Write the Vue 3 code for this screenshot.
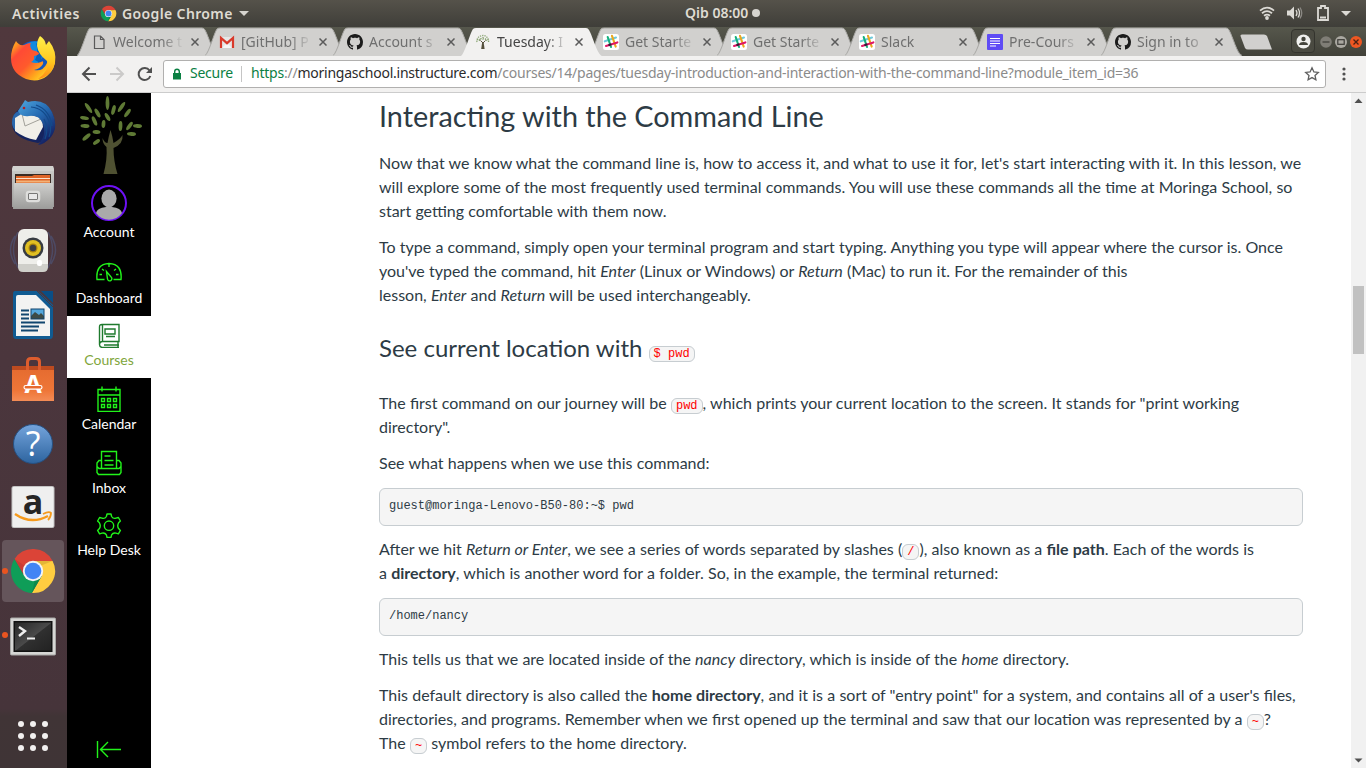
<script setup>
const tabs = [
  { title: 'Welcome t', icon: 'page' },
  { title: '[GitHub] P', icon: 'gmail' },
  { title: 'Account s', icon: 'github' },
  { title: 'Tuesday: I', icon: 'tree', active: true },
  { title: 'Get Starte', icon: 'slack' },
  { title: 'Get Starte', icon: 'slack' },
  { title: 'Slack', icon: 'slack' },
  { title: 'Pre-Cours', icon: 'doc' },
  { title: 'Sign in to', icon: 'github' },
]
const leaves = [
  [29, 7, 90, 7], [10, 12, 55, 6], [43, 11, 125, 6], [35, 14, 105, 5], [49, 17, 125, 5],
  [19, 17, 60, 5], [6, 22, 10, 4.5], [16, 25, 65, 5], [29, 21, 60, 4.5], [25, 28, 95, 4],
  [6.5, 30, 2, 4.5], [42, 30, 92, 5], [51, 30, 125, 5], [59, 30, 2, 4.5], [53, 38, 2, 4.5],
  [18, 36, 5, 4], [8, 41, 140, 5], [18, 46, 145, 4],
]
const dots = [0, 1, 2, 3, 4, 5, 6, 7, 8]
</script>

<template>
  <div class="desktop">
    <svg class="defs" width="0" height="0">
      <defs>
        <symbol id="chrome" viewBox="-24 -24 48 48">
          <path d="M-18.46-11.97A22 22 0 0 1 19.6-10L0-10L-8.66 5Z" fill="#db4437" />
          <path d="M19.6-10A22 22 0 0 1-1.14 21.97L8.66 5L0-10Z" fill="#ffcd40" />
          <path d="M-1.14 21.97A22 22 0 0 1-18.46-11.97L-8.66 5L8.66 5Z" fill="#0f9d58" />
          <path d="M0-10L19.6-10L7-5Z" fill="#c9a02e" opacity=".5" />
          <path d="M-8.66 5L-18.46-11.97L-8-5Z" fill="#b33" opacity=".5" />
          <path d="M8.66 5L-1.14 21.97L2 9Z" fill="#0b7d45" opacity=".6" />
          <circle r="10.2" fill="#f4f4f4" /><circle r="8.3" fill="#4285f4" />
        </symbol>
        <symbol id="github" viewBox="0 0 16 16">
          <path fill="#1b1b1b" d="M8 0C3.58 0 0 3.58 0 8c0 3.54 2.29 6.53 5.47 7.59.4.07.55-.17.55-.38 0-.19-.01-.82-.01-1.49-2.01.37-2.53-.49-2.69-.94-.09-.23-.48-.94-.82-1.13-.28-.15-.68-.52-.01-.53.63-.01 1.08.58 1.23.82.72 1.21 1.87.87 2.33.66.07-.52.28-.87.51-1.07-1.78-.2-3.64-.89-3.64-3.95 0-.87.31-1.59.82-2.15-.08-.2-.36-1.02.08-2.12 0 0 .67-.21 2.2.82.64-.18 1.32-.27 2-.27s1.36.09 2 .27c1.53-1.04 2.2-.82 2.2-.82.44 1.1.16 1.92.08 2.12.51.56.82 1.27.82 2.15 0 3.07-1.87 3.75-3.65 3.95.29.25.54.73.54 1.48 0 1.07-.01 1.93-.01 2.2 0 .21.15.46.55.38A8 8 0 0 0 16 8c0-4.42-3.58-8-8-8z" />
        </symbol>
        <symbol id="gmail" viewBox="0 0 16 16">
          <path d="M1 3h14v11H1z" fill="#e6e6e6" /><path d="M3 14L8 9l5 5z" fill="#f6f6f6" />
          <path d="M2 14V4l6 5.200L14 4v10" fill="none" stroke="#d93a2b" stroke-width="2.200" />
        </symbol>
        <symbol id="page" viewBox="0 0 16 16">
          <path d="M3.5 2h6l3.500 3.500v9H3.500zM9.500 2v3.500H13" fill="none" stroke="#5a5a5a" stroke-width="1.200" />
        </symbol>
        <symbol id="doc" viewBox="0 0 16 16">
          <rect width="16" height="16" rx="1" fill="#5e4bf5" />
          <path d="M3 4.5h10M3 7h10M3 9.5h10M3 12h6" stroke="#fff" stroke-width="1.2" />
        </symbol>
        <symbol id="slack" viewBox="0 0 16 16">
          <rect width="16" height="16" rx="2.5" fill="#fff" />
          <g fill="none" stroke-width="2.1" stroke-linecap="round">
            <path d="M1.800 7.300L13 3.600" stroke="#6ecadc" /><path d="M4.700 3L8 13" stroke="#16b17c" />
            <path d="M9 1.800L12.700 12.600" stroke="#e9a820" /><path d="M3 12L14.400 8.400" stroke="#e01765" />
            <path d="M6.200 11L7.600 10.600" stroke="#381b38" />
          </g>
        </symbol>
        <symbol id="tree" viewBox="0 0 16 16">
          <path d="M6.200 15l1-7h1.400l1 7z" fill="#55503c" />
          <path d="M8 9L5.500 6.500M8 9l2.500-2.500" stroke="#55503c" />
          <g fill="none" stroke="#8ba574" stroke-width="1.300" stroke-dasharray="1.300 1">
            <path d="M2 8C1 4 5 1.500 8 1.500S14 4 13.500 8" /><path d="M4.500 7C4 3.500 11.500 3 11.500 7M2 5.500h3.500M10 5.500h4M8 3v3" />
          </g>
        </symbol>
        <linearGradient id="gblue" x2="0" y2="1"><stop stop-color="#74a4dc" /><stop offset="1" stop-color="#2d649f" /></linearGradient>
        <linearGradient id="ggrey" x2="0" y2="1"><stop stop-color="#cfcfcd" /><stop offset="1" stop-color="#9c9c9a" /></linearGradient>
        <linearGradient id="gora" x2="0" y2="1"><stop stop-color="#e46a2f" /><stop offset=".7" stop-color="#ee7638" /><stop offset="1" stop-color="#f48c56" /></linearGradient>
        <linearGradient id="gfox" x1=".1" y1=".1" x2=".9" y2=".8"><stop stop-color="#ff9a22" /><stop offset=".18" stop-color="#ff4a35" /><stop offset=".5" stop-color="#ff5a2c" /><stop offset=".8" stop-color="#ffab1c" /><stop offset="1" stop-color="#ffd92b" /></linearGradient>
        <linearGradient id="gtail" x2="0" y2="1"><stop stop-color="#fff04a" /><stop offset=".6" stop-color="#ffc71f" /><stop offset="1" stop-color="#ff8a17" /></linearGradient>
        <linearGradient id="gbird" x2=".7" y2="1"><stop stop-color="#4fa8e0" /><stop offset=".5" stop-color="#2468b0" /><stop offset="1" stop-color="#131f61" /></linearGradient>
        <linearGradient id="gterm" x2="1" y2="1"><stop stop-color="#272727" /><stop offset=".5" stop-color="#4a4a4a" /><stop offset=".52" stop-color="#303030" /><stop offset="1" stop-color="#222" /></linearGradient>
      </defs>
    </svg>

    <header class="panel">
      <div class="left">
        <span class="activities">Activities</span>
        <svg class="pchrome" width="17" height="17"><use href="#chrome" /></svg>
        <span class="appname">Google Chrome</span>
        <svg width="10" height="5"><path d="M0 0h10L5 5z" fill="#d6d4cf" /></svg>
      </div>
      <div class="clock">Qib 08:00<i></i></div>
      <svg class="tray" width="96" height="27">
        <g fill="none" stroke="#dcdad5" stroke-width="1.800">
          <path d="M5 10.600Q12 4.700 19 10.600M7 13.300Q12 9 17 13.300M9 15.800Q12 13.500 15 15.800" />
        </g>
        <circle cx="12" cy="18" r="1.900" fill="#dcdad5" />
        <path d="M32 10.500h3l4-4v13l-4-4h-3z" fill="#dcdad5" />
        <path d="M41 10q2 3 0 6M43 8.500q3 4.500 0 9" fill="none" stroke="#dcdad5" stroke-width="1.300" />
        <path d="M45 7.500q3.500 5.500 0 11" fill="none" stroke="#8b8984" stroke-width="1.300" />
        <path d="M63 8h3V6h4v2h3v12H63zM65 17.500h6" fill="none" stroke="#dcdad5" stroke-width="1.800" />
        <path d="M86 11h10l-5 5z" fill="#dcdad5" />
      </svg>
    </header>

    <div class="body">
      <aside class="launcher">
        <div class="app">
          <svg viewBox="0 0 48 48">
            <circle cx="25" cy="24" r="18" fill="#1457bd" /><path d="M14 13Q20 4 31 7L34 22 27 30 17 25z" fill="#128be0" />
            <path d="M31 28Q36 15 27 8q3 9-1 17z" fill="#0a60ba" />
            <path d="M7 6Q10 11 15 10Q19 8 22 8Q20 11 23 15Q28 16 30 18Q30 20 25 21Q26 25 22 27Q27 29 32 27Q35 25 34 29Q31 34 25 35Q34 37 38 28Q41 22 46 22Q47 34 38 41Q29 48 17 44Q2 38 2 23Q2 14 7 6z" fill="url(#gfox)" />
            <path d="M31 1Q36 4 37 10L40 6Q48 16 46 28Q42 42 29 44Q41 35 38 26Q29 19 28 11Q28 5 31 1z" fill="url(#gtail)" />
          </svg>
        </div>
        <div class="app">
          <svg viewBox="0 0 48 48">
            <path d="M9 11Q17 1 28 3Q46 8 46 27Q45 39 29 44Q4 40 3 25Q3 16 9 11z" fill="#15245f" />
            <path d="M3 24Q3 14 10 12L16 16 9 25 8 33Q3 29 3 24z" fill="#2a68ad" />
            <path d="M6 19l8-5 19 5 1 9-7 13q-12-2-21-9z" fill="#f1efe8" /><path d="M13 15l3 12 16-7" fill="none" stroke="#a2a19a" />
            <path d="M9 12Q15 3 16 1l3 2Q36-1 43 13Q50 27 42 38Q36 45 29 46Q38 37 34 25Q30 15 20 17Q15 18 11 15z" fill="url(#gbird)" />
            <path d="M22 8Q36 9 41 25M27 6Q41 11 43 27M35 20Q40 29 36 40M38 18Q44 28 40 38" fill="none" stroke="#134a8a" stroke-width="1.200" />
            <circle cx="15" cy="9" r="1.300" fill="#a8242a" />
          </svg>
        </div>
        <div class="app">
          <svg viewBox="0 0 48 48">
            <path d="M4 3h40l1 3v38H3V6z" fill="url(#ggrey)" /><path d="M4 3h40l1 5H3z" fill="#d2d2cf" />
            <rect x="6" y="11" width="36" height="10" fill="#3b2b24" /><path d="M7 13h16l2-1h16v9H7z" fill="#df6529" /><path d="M7 15.500h34" stroke="#fbe1cb" /><path d="M7 18.500h34" stroke="#f3b277" stroke-width="2" />
            <path d="M5 20h39v26H4z" fill="url(#ggrey)" />
            <rect x="18" y="29" width="12" height="9" rx="2" fill="#555" stroke="#dededc" stroke-width="2.500" /><rect x="20" y="31" width="8" height="5" fill="#e8e8e8" />
          </svg>
        </div>
        <div class="app">
          <svg viewBox="0 0 48 48">
            <path d="M6 9Q-3 23 6 37M42 9q9 14 0 28M9 5Q0 22 9 41M39 5q9 17 0 36" fill="none" stroke="#4d4f6d" stroke-width="1.500" opacity=".8" />
            <rect x="9" y="2" width="30" height="42" rx="6" fill="#eeeeea" /><path d="M9 37v3q0 5 5 5h20q5 0 5-5v-3z" fill="#cfcfca" />
            <circle cx="24" cy="21" r="10.500" fill="#373b41" /><circle cx="24" cy="21" r="8" fill="#e0bf22" /><circle cx="24" cy="21" r="4.500" fill="#a9820d" /><circle cx="24" cy="21" r="3.200" fill="#3b3d41" />
            <rect x="28" y="33" width="5" height="6" rx="2" fill="#fff" />
          </svg>
        </div>
        <div class="app">
          <svg viewBox="0 0 48 48">
            <path d="M6 0h23l15 14v30q0 4-3 4H7q-3 0-3-4V3q0-3 2-3z" fill="#105b92" /><path d="M32 0h12v12z" fill="#0a4e85" />
            <path d="M9 4h18l14 14v27H7V6q0-2 2-2z" fill="#f3f3f2" /><path d="M28 0l16 16" stroke="#4c383f" stroke-width="1" />
            <path d="M12 19.500h8M12 23.500h8M12 27.500h8M12 31.500h24M12 35.500h18M12 39.500h17" stroke="#11466f" stroke-width="2" />
            <path d="M22 18h13v10H22z" fill="#54a7dc" /><path d="M22 28v-3l4-4 4 3 2-2 3 3v3z" fill="#3d4b46" /><rect x="22" y="18" width="13" height="10" fill="none" stroke="#10446c" />
          </svg>
        </div>
        <div class="app">
          <svg viewBox="0 0 48 48">
            <path d="M3 11h42v35H3z" fill="url(#gora)" /><path d="M3 11h42v4H3z" fill="#bd4b20" />
            <path d="M18.500 15V7q0-3.500 3.500-3.500h5q3.500 0 3.500 3.500v8" fill="none" stroke="#dd5d2e" stroke-width="3" />
            <text x="24" y="38" class="softa">A</text><rect x="15" y="30.500" width="18" height="3.600" rx="1.800" fill="#e86a2f" stroke="#fff" stroke-width="1.200" />
          </svg>
        </div>
        <div class="app low">
          <svg viewBox="0 0 48 48">
            <circle cx="24" cy="24" r="19.500" fill="url(#gblue)" stroke="#265081" /><text x="24" y="36" class="qmark">?</text>
          </svg>
        </div>
        <div class="app">
          <svg viewBox="0 0 48 48">
            <rect x="3" y="3.500" width="42" height="41" rx="1.500" fill="#efefef" stroke="#c4c4c4" />
            <text x="24" y="31" class="amz">a</text>
            <path d="M6 31q16 11 33 2" fill="none" stroke="#f69a1c" stroke-width="2.400" /><path d="M34 31q6-3 8-1 0 4-3 7" fill="none" stroke="#f69a1c" stroke-width="1.800" />
          </svg>
        </div>
        <div class="app current">
          <b class="run"></b><svg viewBox="0 0 48 48"><use href="#chrome" /></svg>
        </div>
        <div class="app low">
          <b class="run"></b>
          <svg viewBox="0 0 48 48">
            <rect x="1.500" y="6" width="45" height="37" rx="1" fill="#d6d6d4" stroke="#a9a9a7" /><rect x="4.500" y="9" width="39" height="31" fill="#111" />
            <rect x="6" y="10.500" width="36" height="28" fill="url(#gterm)" />
            <path d="M10 15l6 4-6 5" fill="none" stroke="#eee" stroke-width="2.400" /><path d="M18 26.500h8" stroke="#eee" stroke-width="2" />
          </svg>
        </div>
        <div class="apps"><i v-for="d in dots" :key="d"></i></div>
      </aside>

      <section class="browser">
        <div class="strip">
          <div v-for="(t, i) in tabs" :key="i" class="tab" :class="{ active: t.active }">
            <svg class="shape" width="142" height="29">
              <path d="M0 29C4 26 9 6 12 2Q13 1 15 1H125Q127 1 128 3C132 10 136 27 141 29Z" class="fill" />
              <path d="M0 28.500C4 26 9 6 12 2Q13 1 15 1H125Q127 1 128 3C132 10 136 27 141 28.500" class="edge" />
            </svg>
            <svg class="fav" width="16" height="16"><use :href="'#' + t.icon" /></svg>
            <span class="title">{{ t.title }}</span>
            <svg class="close" width="8" height="8"><path d="M.5.5l7 7M7.500.5l-7 7" stroke="#5b5b5b" stroke-width="1.500" /></svg>
          </div>
          <svg class="newtab" width="33" height="16"><path d="M2 .500H24Q26 .500 27 2L32 15.500H8Q6 15.500 5 14L.500 2Q0 .500 2 .500z" fill="#d1d0ce" /></svg>
          <div class="profile">
            <svg width="15" height="15" viewBox="0 0 15 15"><circle cx="7.500" cy="7.500" r="7" fill="#f0f0ee" /><circle cx="7.500" cy="5" r="2.200" fill="#45453d" /><path d="M3 11q0-3 4.500-3t4.500 3z" fill="#45453d" /></svg>
          </div>
          <svg class="winctl" width="43" height="14">
            <circle cx="7" cy="7" r="5.800" fill="#7f7d76" /><path d="M3.500 7h7" stroke="#3c3b37" stroke-width="1.200" />
            <circle cx="22" cy="7" r="6" fill="#aaa8a1" /><rect x="18.800" y="4.700" width="6.400" height="4.600" fill="none" stroke="#3c3b37" stroke-width="1.200" />
            <circle cx="37" cy="7" r="6" fill="#ee5722" /><path d="M34.500 4.500l5 5M39.500 4.500l-5 5" stroke="#4a2013" stroke-width="1.300" />
          </svg>
        </div>

        <div class="toolbar">
          <svg class="navs" width="96" height="36" fill="none" stroke-width="2">
            <path d="M29 18H16M22.500 11.500L16 18l6.500 6.500" stroke="#505050" />
            <path d="M43 18h13M49.500 11.500L56 18l-6.500 6.500" stroke="#cbcac9" />
            <path d="M82.500 14.500a6 6 0 1 0 .800 5.500" stroke="#505050" /><path d="M85 11v6h-6z" fill="#505050" />
          </svg>
          <div class="omni">
            <svg class="lock" width="10" height="12"><path d="M1 5h8v6.500H1z" fill="#0b8043" /><path d="M2.700 5V3.500a2.300 2.300 0 0 1 4.600 0V5" fill="none" stroke="#0b8043" stroke-width="1.400" /></svg>
            <span class="secure">Secure</span><span class="bar"></span>
            <span class="url"><span class="g">https</span>://<span class="k">moringaschool.instructure.com</span>/courses/14/pages/tuesday-introduction-and-interaction-with-the-command-line?module_item_id=36</span>
            <svg class="star" width="16" height="16"><path d="M8 1.800l1.900 4.100 4.400.500-3.300 3 .900 4.400L8 11.600l-3.900 2.200.900-4.400-3.300-3 4.400-.500z" fill="none" stroke="#5f5f5f" stroke-width="1.300" /></svg>
          </div>
          <svg class="more" width="6" height="16" fill="#505050"><circle cx="3" cy="3" r="1.600" /><circle cx="3" cy="8" r="1.600" /><circle cx="3" cy="13" r="1.600" /></svg>
        </div>

        <div class="page">
          <nav class="global">
            <svg class="logo" width="84" height="84">
              <g transform="translate(11.500 3)">
                <g fill="#5f7a35"><ellipse v-for="(l, i) in leaves" :key="i" :cx="l[0]" :cy="l[1]" :rx="l[3]" ry="1.900" :transform="`rotate(${l[2]} ${l[0]} ${l[1]})`" /></g>
                <path d="M25 78q4-15 3-27-4-3-4-9 2 5 5 5 1-6 3-13 2 6 3 13 7-4 9-8 1 9-9 13 0 13 4 26z" fill="#4f5132" />
              </g>
            </svg>
            <div class="item account">
              <svg width="36" height="36"><circle cx="18" cy="18" r="17" fill="#000" stroke="#6d11f5" stroke-width="2" /><path d="M5 28Q6 23 15 22h6q9 1 10 6a16 16 0 0 1-26 0z" fill="#aaa" /><ellipse cx="18" cy="13.500" rx="7.600" ry="9" fill="#aaa" /></svg>
              <span>Account</span>
            </div>
            <div class="item">
              <svg width="26" height="26"><path d="M8.500 19.500H1Q-.500 4 13 3.500 26.500 4 25 19.500H17.500M13 4v3M6 9l2 1.500M20 9l-2 1.500M3.500 14.500H6M20 14.500h2.500M10.500 11.500l1 7.500a2.200 2.200 0 1 0 3.600-2z" /></svg>
              <span>Dashboard</span>
            </div>
            <div class="item on">
              <svg width="26" height="26"><path d="M6 2.500h17v17H6.500q-3 0-3 3V5q0-2.500 2.500-2.500zM6.500 2.500v17M9 7h10v5H9zM10 14.500h9M6 19.500q-2.500.500-2.500 3t2.500 3h17M8 23h15M22 19.500v6" /></svg>
              <span>Courses</span>
            </div>
            <div class="item tall">
              <svg width="26" height="26"><path d="M2 3.500h22v22H2zM2 9h22M6 .500v5M20 .500v5M5.500 12.500h3v3h-3zM11.500 12.500h3v3h-3zM17.500 12.500h3v3h-3zM5.500 18.500h3v3h-3zM11.500 18.500h3v3h-3zM17.500 18.500h3v3h-3z" /></svg>
              <span>Calendar</span>
            </div>
            <div class="item tall">
              <svg width="26" height="26"><path d="M5.500 18.500V1.500h15v17M8.500 6h6M8.500 10.500h9M8.500 15h9M5.500 10.500H3L1 13v9.500l1.500 2h21l1.500-2V13l-2-2.500h-2.500M1 16.500l2 2h20l2-2" /></svg>
              <span>Inbox</span>
            </div>
            <div class="item">
              <svg width="26" height="26" stroke-linejoin="round"><circle cx="13" cy="13.700" r="4.700" /><path d="M11 2h4l.600 2.500q1.500 2.500 4.400 1.700l2.400-.700 2 3.500-1.800 1.800q-1.700 2.900 0 5.800l1.800 1.800-2 3.500-2.400-.700q-2.900-.800-4.400 1.700L15 25.400h-4l-.600-2.500q-1.500-2.500-4.400-1.700l-2.400.700-2-3.500 1.800-1.800q1.700-2.900 0-5.800L1.600 9l2-3.500 2.400.700q2.900.800 4.400-1.700z" /></svg>
              <span>Help Desk</span>
            </div>
            <svg class="collapse" width="26" height="20"><path d="M1.500 1v17M4 9.500h21M12 2L4.500 9.500 12 17" /></svg>
          </nav>

          <main class="content">
            <h2>Interacting with the Command Line</h2>
            <p>Now that we know what the command line is, how to access it, and what to use it for, let's start interacting with it. In this lesson, we<br>will explore some of the most frequently used terminal commands. You will use these commands all the time at Moringa School, so<br>start getting comfortable with them now.</p>
            <p>To type a command, simply open your terminal program and start typing. Anything you type will appear where the cursor is. Once<br>you've typed the command, hit <em>Enter</em> (Linux or Windows) or <em>Return</em> (Mac) to run it. For the remainder of this<br>lesson, <em>Enter</em> and <em>Return</em> will be used interchangeably.</p>
            <h3>See current location with <code>$ pwd</code></h3>
            <p>The first command on our journey will be <code>pwd</code>, which prints your current location to the screen. It stands for "print working<br>directory".</p>
            <p class="before">See what happens when we use this command:</p>
            <pre>guest@moringa-Lenovo-B50-80:~$ pwd</pre>
            <p class="before">After we hit <em>Return or Enter</em>, we see a series of words separated by slashes (<code>/</code>), also known as a <strong>file path</strong>. Each of the words is<br>a <strong>directory</strong>, which is another word for a folder. So, in the example, the terminal returned:</p>
            <pre>/home/nancy</pre>
            <p>This tells us that we are located inside of the <em>nancy</em> directory, which is inside of the <em>home</em> directory.</p>
            <p>This default directory is also called the <strong>home directory</strong>, and it is a sort of "entry point" for a system, and contains all of a user's files,<br>directories, and programs. Remember when we first opened up the terminal and saw that our location was represented by a <code>~</code>?<br>The <code>~</code> symbol refers to the home directory.</p>
          </main>

          <div class="scroll">
            <svg width="15" height="15"><path d="M3.500 10h8l-4-4.500z" fill="#505050" /></svg>
            <div class="thumb"></div>
            <svg class="down" width="15" height="15"><path d="M3.500 5.500h8l-4 4z" fill="#505050" /></svg>
          </div>
        </div>
      </section>
    </div>
  </div>
</template>

<style>
body { margin: 0; overflow: hidden; }
</style>
<style scoped>
.desktop { width: 1366px; height: 768px; display: flex; flex-direction: column; overflow: hidden; font-family: "Noto Sans", sans-serif; position: relative; }
.defs { position: absolute; }
svg { flex: none; display: block; }
.panel { height: 27px; display: grid; grid-template-columns: 685px auto 1fr; align-items: center; background: linear-gradient(#55524a, #3f3e39); color: #dfdbd2; font-size: 14px; font-weight: 600; white-space: nowrap; }
.left { display: flex; align-items: center; padding-left: 12px; }
.activities { width: 88px; letter-spacing: .55px; }
.pchrome { margin-right: 5px; }
.appname { width: 117px; letter-spacing: .37px; }
.clock { display: flex; align-items: center; font-size: 14px; line-height: 20px; padding-bottom: 2px; }
.clock i { width: 8px; height: 8px; border-radius: 50%; background: #d6d4cf; margin-left: 4px; }
.tray { justify-self: end; margin-right: 15px; }
.body { display: flex; flex: 1; min-height: 0; }
.launcher { width: 67px; display: flex; flex-direction: column; background: linear-gradient(#50383d, #4b363d 45%, #46343a 92%, #403436 93%, #3f3436); }
.app { height: 64px; display: flex; align-items: center; justify-content: center; position: relative; flex: none; }
.app > svg { width: 48px; height: 48px; margin-right: 1px; }
.app.low > svg { margin-top: 2px; }
.app.current::before { content: ""; position: absolute; left: 2px; top: 1px; width: 62px; height: 62px; border-radius: 4px; background: #65555b; }
.app.current > svg { position: relative; }
.run { position: absolute; left: 2px; top: 29px; width: 6px; height: 6px; border-radius: 50%; background: #e95420; z-index: 1; }
.apps { margin: auto auto 17px 18px; display: grid; grid-template-columns: repeat(3, 6px); gap: 6px; }
.apps i { width: 6px; height: 6px; border-radius: 50%; background: #f2f0f0; }
.softa { font: 700 25px "Open Sans", sans-serif; fill: #fff; text-anchor: middle; }
.qmark { font: 34px "Open Sans", sans-serif; fill: #fff; text-anchor: middle; }
.amz { font: 700 34px "Open Sans", sans-serif; fill: #252525; text-anchor: middle; }
.browser { flex: 1; display: flex; flex-direction: column; min-width: 0; }
.strip { height: 29px; display: flex; padding-left: 10px; background: linear-gradient(#56574c, #414139); }
.tab { width: 128px; height: 29px; display: flex; align-items: center; position: relative; flex: none; }
.tab.active { z-index: 2; }
.shape { position: absolute; left: 0; top: 0; }
.fill { fill: #d1d0ce; }
.edge { fill: none; stroke: #a9a8a5; }
.active .fill { fill: #f2f1f0; }
.active .edge { stroke: none; }
.fav { position: relative; margin-left: 14px; }
.title { position: relative; width: 74px; margin-left: 6px; font-size: 14px; line-height: 20px; color: #6f6f6f; white-space: nowrap; -webkit-mask-image: linear-gradient(90deg, #000 65%, transparent 96%); mask-image: linear-gradient(90deg, #000 65%, transparent 96%); }
.active .title { color: #454545; }
.close { position: relative; margin-left: 4px; }
.newtab { margin: 7px 0 0 11px; }
.profile { width: 22px; height: 22px; margin: 2px 0 0 18px; border: 1px solid #34342e; border-radius: 4px; background: #4a4a41; display: flex; align-items: center; justify-content: center; }
.winctl { margin: 8px 0 0 4px; }
.toolbar { height: 36px; display: flex; align-items: center; background: #f2f1f0; border-bottom: 1px solid #ccc; }
.omni { width: 1161px; height: 26px; border: 1px solid #b1b0af; border-radius: 3px; background: #fff; display: flex; align-items: center; font-size: 14px; white-space: nowrap; }
.lock { margin-left: 8px; }
.secure { width: 51px; margin-left: 8px; color: #0b8043; letter-spacing: -.25px; line-height: 18px; padding-bottom: 2px; }
.bar { width: 1px; height: 16px; background: #c5c5c5; }
.url { width: 1050px; margin-left: 9px; color: #8b8b8b; letter-spacing: -.235px; line-height: 18px; padding-bottom: 2px; }
.g { color: #0b8043; }
.k { color: #2b2b2b; }
.star { margin-left: 3px; }
.more { margin-left: 15px; }
.page { flex: 1; display: flex; min-height: 0; background: #fff; }
.global { width: 84px; background: #000; display: flex; flex-direction: column; font-family: Lato, sans-serif; }
.item { height: 50px; padding: 3px 0 9px; display: flex; flex-direction: column; align-items: center; justify-content: flex-end; gap: 3px; color: #fff; font-size: 14px; line-height: 18px; }
.item.tall { height: 52px; }
.item.account { height: 61px; margin-bottom: 4px; gap: 2px; }
.item:not(.account) svg, .collapse { fill: none; stroke: #21f31a; stroke-width: 1.4; }
.item.on { background: #fff; color: #7fa63c; }
.item.on:not(.account) svg { stroke: #1e7a2d; }
.collapse { margin: auto auto 8px 29px; }
.content { flex: 1; padding: 5px 0 0 228px; font-family: Lato, sans-serif; font-size: 16px; line-height: 24px; color: #2d3b45; white-space: nowrap; word-spacing: .12px; }
h2 { height: 36px; margin: 0 0 17px; font-size: 28.8px; font-weight: 400; line-height: 36px; word-spacing: 0; }
h3 { height: 36px; margin: 23px 0 25px; font-size: 24px; font-weight: 400; line-height: 36px; word-spacing: 0; }
p { margin: 0 0 12px; }
p.before { margin-bottom: 13px; }
code { font-family: "Liberation Mono", monospace; font-size: 12px; line-height: 13px; color: #f00; background: #f5f5f5; border: 1px solid #c7cdd1; border-radius: 6px; padding: 0 4px; word-spacing: 0; }
pre { width: 904px; height: 28px; margin: 0 0 11px; padding: 8px 9px 0; border: 1px solid #c7cdd1; border-radius: 6px; background: #f5f5f5; font: 12px/18px "Liberation Mono", monospace; word-spacing: 0; }
.scroll { width: 15px; background: #f1f1f1; display: flex; flex-direction: column; align-items: center; }
.thumb { width: 11px; height: 68px; margin-top: 178px; background: #c1c1c1; }
.down { margin-top: auto; }
</style>
